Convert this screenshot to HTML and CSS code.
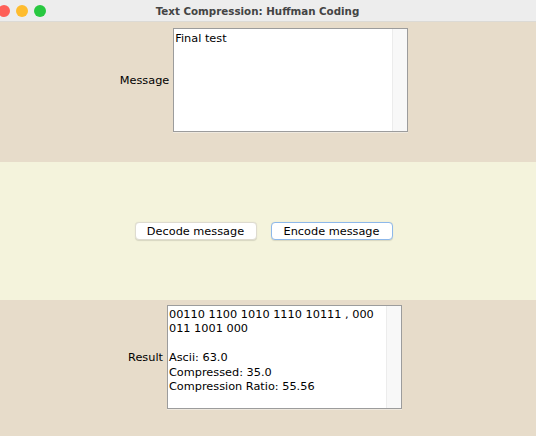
FILE: index.html
```html
<!DOCTYPE html>
<html>
<head>
<meta charset="utf-8">
<link rel="stylesheet" href="styles.css">
</head>
<body>
<div class="window">
  <div class="titlebar">
    <div class="lights">
      <span class="light red"></span>
      <span class="light yellow"></span>
      <span class="light green"></span>
    </div>
    <div class="title">Text Compression: Huffman Coding</div>
  </div>
  <div class="section top">
    <div class="row">
      <label class="label">Message</label>
      <div class="box msg">
        <div class="text">Final test</div>
        <div class="scroll"></div>
      </div>
    </div>
  </div>
  <div class="section middle">
    <div class="buttons">
      <button class="btn">Decode message</button>
      <button class="btn focus">Encode message</button>
    </div>
  </div>
  <div class="section bottom">
    <div class="row">
      <label class="label">Result</label>
      <div class="box res">
        <div class="text">00110 1100 1010 1110 10111 , 000<br>011 1001 000<br><br>Ascii: 63.0<br>Compressed: 35.0<br>Compression Ratio: 55.56</div>
        <div class="scroll"></div>
      </div>
    </div>
  </div>
</div>
</body>
</html>
```

FILE: styles.css
```css
html, body {
  margin: 0;
  padding: 0;
  background: #e7dcca;
  font-family: "DejaVu Sans", sans-serif;
  font-size: 11.3px;
  color: #000;
}
.window {
  width: 536px;
  height: 436px;
  display: flex;
  flex-direction: column;
  overflow: hidden;
}
.titlebar {
  height: 21px;
  flex: none;
  background: #ededed;
  border-bottom: 1px solid #dcdad5;
  position: relative;
  display: flex;
  align-items: center;
  justify-content: center;
  padding-right: 21px;
}
.lights {
  position: absolute;
  left: -2px;
  top: 5px;
  display: flex;
  gap: 6px;
}
.light {
  width: 12px;
  height: 12px;
  border-radius: 50%;
  display: block;
}
.red { background: #fe5f57; }
.yellow { background: #febc2e; }
.green { background: #28c840; }
.title {
  font-weight: bold;
  font-size: 10.3px;
  color: #444;
}
.section {
  display: flex;
  justify-content: center;
  padding-right: 7px;
}
.top {
  height: 140px;
  align-items: flex-start;
}
.top .row { margin-top: 6px; margin-left: -1px; }
.middle {
  height: 138px;
  background: #f4f3dc;
  align-items: center;
}
.bottom {
  flex: 1;
  align-items: flex-start;
}
.bottom .row { margin-top: 5px; margin-left: 1px; }
.row {
  display: flex;
  align-items: center;
  gap: 4px;
}
.label {
  color: #000;
}
.box {
  width: 233px;
  height: 102px;
  background: #fff;
  border: 1px solid #9c9c9c;
  box-shadow: 0 1px 0 #efe9df;
  display: flex;
}
.box .text {
  flex: 1;
  line-height: 14.4px;
  white-space: nowrap;
}
.msg .text { padding: 3px 0 0 1px; }
.res .text { padding: 2px 0 0 1px; }
.scroll {
  width: 14px;
  background: #f8f8f8;
  border-left: 1px solid #ececec;
}
.buttons {
  display: flex;
  gap: 14px;
  margin-right: 2px;
}
.btn {
  width: 122px;
  height: 18px;
  padding: 0;
  font-family: "DejaVu Sans", sans-serif;
  font-size: 11.3px;
  color: #000;
  background: #fff;
  border: 1px solid #dedbd0;
  border-radius: 4px;
  box-shadow: 0 0.5px 1px rgba(0,0,0,0.12);
}
.btn.focus {
  border: 1.5px solid #8db8ea;
}
```
